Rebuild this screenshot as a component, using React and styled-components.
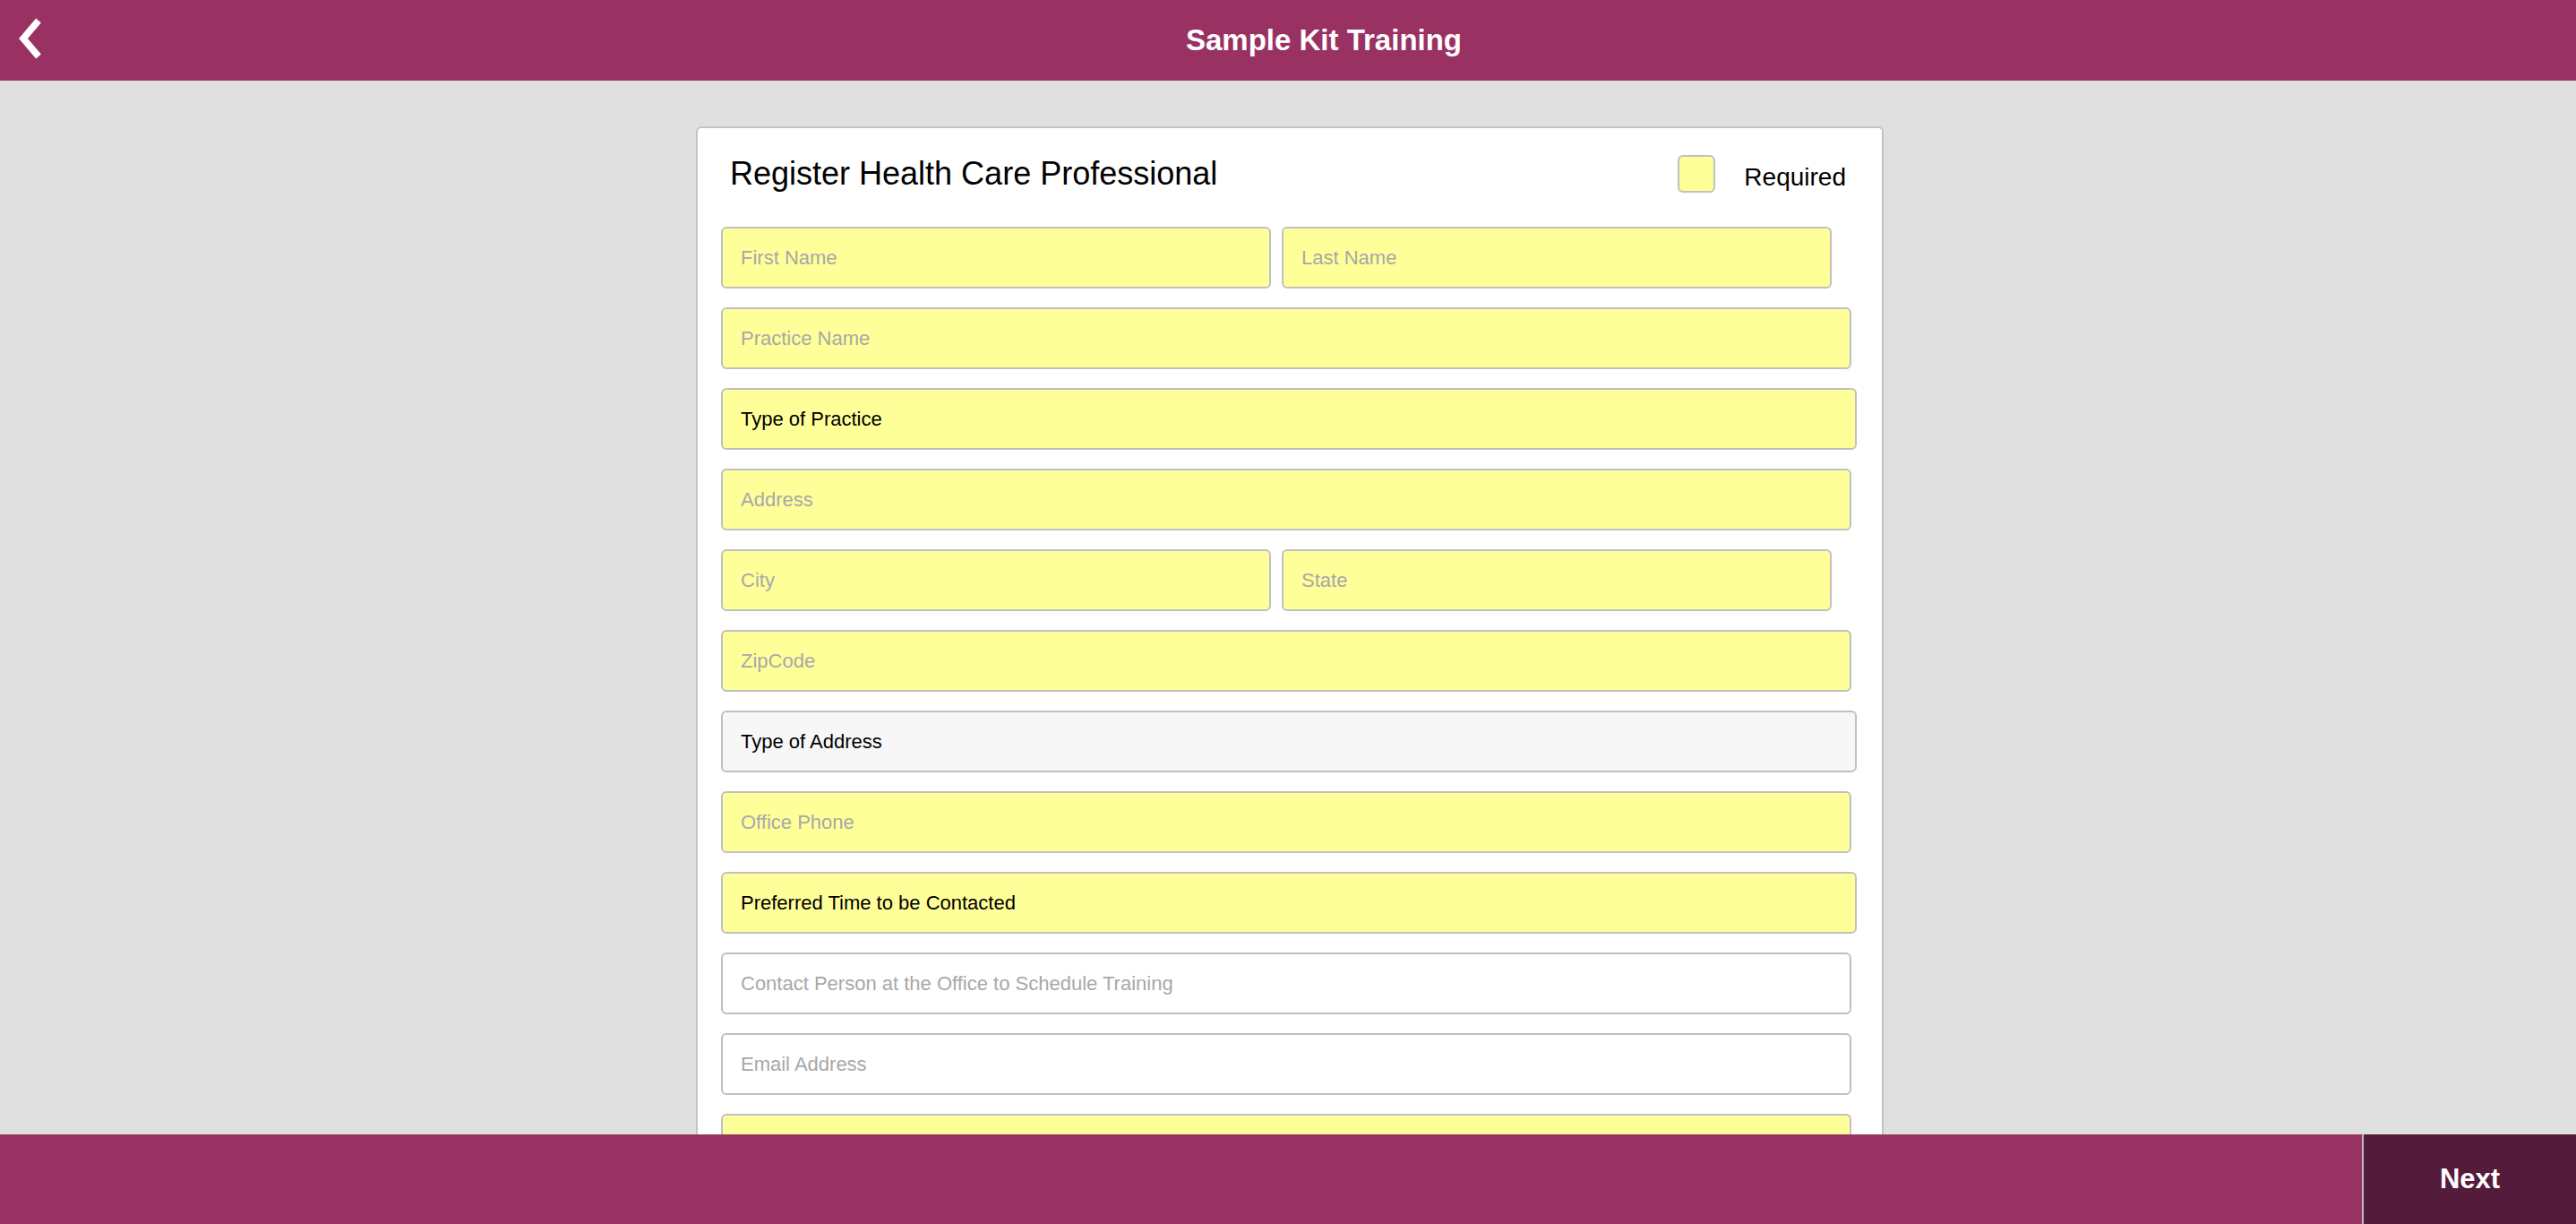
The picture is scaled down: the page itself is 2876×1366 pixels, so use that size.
import React from 'react';
import styled, { createGlobalStyle } from 'styled-components';

const GlobalStyle = createGlobalStyle`
  html, body {
    margin: 0;
    padding: 0;
    height: 100%;
    background: #dfdfdf;
    font-family: "Liberation Sans", Arial, Helvetica, sans-serif;
  }
  #root {
    height: 100%;
  }
`;

const fields = [
  { kind: 'pair', items: [
    { placeholder: 'First Name', required: true },
    { placeholder: 'Last Name', required: true },
  ] },
  { kind: 'input', placeholder: 'Practice Name', required: true },
  { kind: 'select', label: 'Type of Practice', required: true },
  { kind: 'input', placeholder: 'Address', required: true },
  { kind: 'pair', items: [
    { placeholder: 'City', required: true },
    { placeholder: 'State', required: true },
  ] },
  { kind: 'input', placeholder: 'ZipCode', required: true },
  { kind: 'select', label: 'Type of Address', required: false },
  { kind: 'input', placeholder: 'Office Phone', required: true },
  { kind: 'select', label: 'Preferred Time to be Contacted', required: true },
  { kind: 'input', placeholder: 'Contact Person at the Office to Schedule Training', required: false },
  { kind: 'input', placeholder: 'Email Address', required: false },
  { kind: 'input', placeholder: 'Specialty', required: true },
];

const App = () => {
  return (
    <Page>
      <GlobalStyle />
      <TopBar>
        <BackButton aria-label="Back">
          <svg width="30" height="48" viewBox="0 0 30 48">
            <polyline
              points="25,4 8,24 25,44"
              fill="none"
              stroke="#ffffff"
              strokeWidth="7.5"
              strokeLinejoin="miter"
              strokeLinecap="butt"
            />
          </svg>
        </BackButton>
        <TopTitle>Sample Kit Training</TopTitle>
      </TopBar>

      <Content>
        <Card>
          <CardHeader>
            <CardTitle>Register Health Care Professional</CardTitle>
            <Legend>
              <LegendSwatch />
              <LegendLabel>Required</LegendLabel>
            </Legend>
          </CardHeader>

          <FieldList>
            {fields.map((field, index) => {
              if (field.kind === 'pair') {
                return (
                  <PairRow key={index}>
                    {field.items.map((item) => (
                      <TextInput
                        key={item.placeholder}
                        $required={item.required}
                        $width={614}
                        placeholder={item.placeholder}
                      />
                    ))}
                  </PairRow>
                );
              }
              if (field.kind === 'select') {
                return (
                  <SelectBox key={index} $required={field.required} defaultValue="">
                    <option value="">{field.label}</option>
                  </SelectBox>
                );
              }
              return (
                <TextInput
                  key={index}
                  $required={field.required}
                  $width={1262}
                  placeholder={field.placeholder}
                />
              );
            })}
          </FieldList>
        </Card>
      </Content>

      <BottomBar>
        <NextButton>Next</NextButton>
      </BottomBar>
    </Page>
  );
};

const Page = styled.div`
  height: 100vh;
  display: flex;
  flex-direction: column;
  overflow: hidden;
`;

const TopBar = styled.header`
  height: 90px;
  flex-shrink: 0;
  background: #993262;
  display: flex;
  align-items: center;
`;

const BackButton = styled.button`
  width: 80px;
  height: 90px;
  padding: 19px 0 0 18px;
  border: none;
  background: transparent;
  display: flex;
  align-items: flex-start;
  cursor: pointer;
  svg {
    filter: blur(0.4px);
  }
`;

const TopTitle = styled.h1`
  flex: 1;
  margin: 0;
  text-align: center;
  color: #ffffff;
  font-size: 33px;
  font-weight: bold;
  line-height: 90px;
`;

const Content = styled.main`
  flex: 1;
  overflow: hidden;
  padding: 51px 0 0 4px;
  display: flex;
  justify-content: center;
  align-items: flex-start;
`;

const Card = styled.section`
  width: 1326px;
  box-sizing: border-box;
  background: #ffffff;
  border: 2px solid #c3c3c3;
  border-radius: 6px;
  padding: 30px 40px 40px 26px;
`;

const CardHeader = styled.div`
  height: 42px;
  display: flex;
  align-items: center;
  justify-content: space-between;
  padding-left: 10px;
  margin-bottom: 38px;
`;

const CardTitle = styled.h2`
  margin: 0;
  font-size: 36px;
  font-weight: normal;
  line-height: 42px;
  color: #000000;
`;

const Legend = styled.div`
  display: flex;
  align-items: center;
  gap: 32px;
`;

const LegendSwatch = styled.span`
  width: 42px;
  height: 42px;
  box-sizing: border-box;
  background: #ffff99;
  border: 2px solid #c0c0c0;
  border-radius: 6px;
`;

const LegendLabel = styled.span`
  font-size: 28px;
  color: #000000;
  margin-top: 8px;
`;

const FieldList = styled.div`
  display: flex;
  flex-direction: column;
  gap: 21px;
`;

const PairRow = styled.div`
  display: flex;
  gap: 12px;
`;

const fieldBase = `
  height: 69px;
  box-sizing: border-box;
  border: 2px solid #c0c0c0;
  border-radius: 6px;
  padding: 0 20px;
  font-family: "Liberation Sans", Arial, Helvetica, sans-serif;
  font-size: 22px;
  outline: none;
  margin: 0;
`;

const TextInput = styled.input`
  ${fieldBase}
  width: ${({ $width }) => $width}px;
  background: ${({ $required }) => ($required ? '#ffff99' : '#ffffff')};
  color: #000000;

  &::placeholder {
    color: #a8a8a8;
  }
`;

const SelectBox = styled.select`
  ${fieldBase}
  width: 1268px;
  appearance: none;
  -webkit-appearance: none;
  background: ${({ $required }) => ($required ? '#ffff99' : '#f7f7f7')};
  color: #000000;
`;

const BottomBar = styled.footer`
  height: 100px;
  flex-shrink: 0;
  background: #993262;
  display: flex;
  justify-content: flex-end;
`;

const NextButton = styled.button`
  width: 239px;
  height: 100px;
  box-sizing: border-box;
  border: none;
  border-left: 2px solid #b9b9b9;
  background: #541c3a;
  color: #ffffff;
  font-family: "Liberation Sans", Arial, Helvetica, sans-serif;
  font-size: 31px;
  font-weight: bold;
  cursor: pointer;
`;

export default App;
